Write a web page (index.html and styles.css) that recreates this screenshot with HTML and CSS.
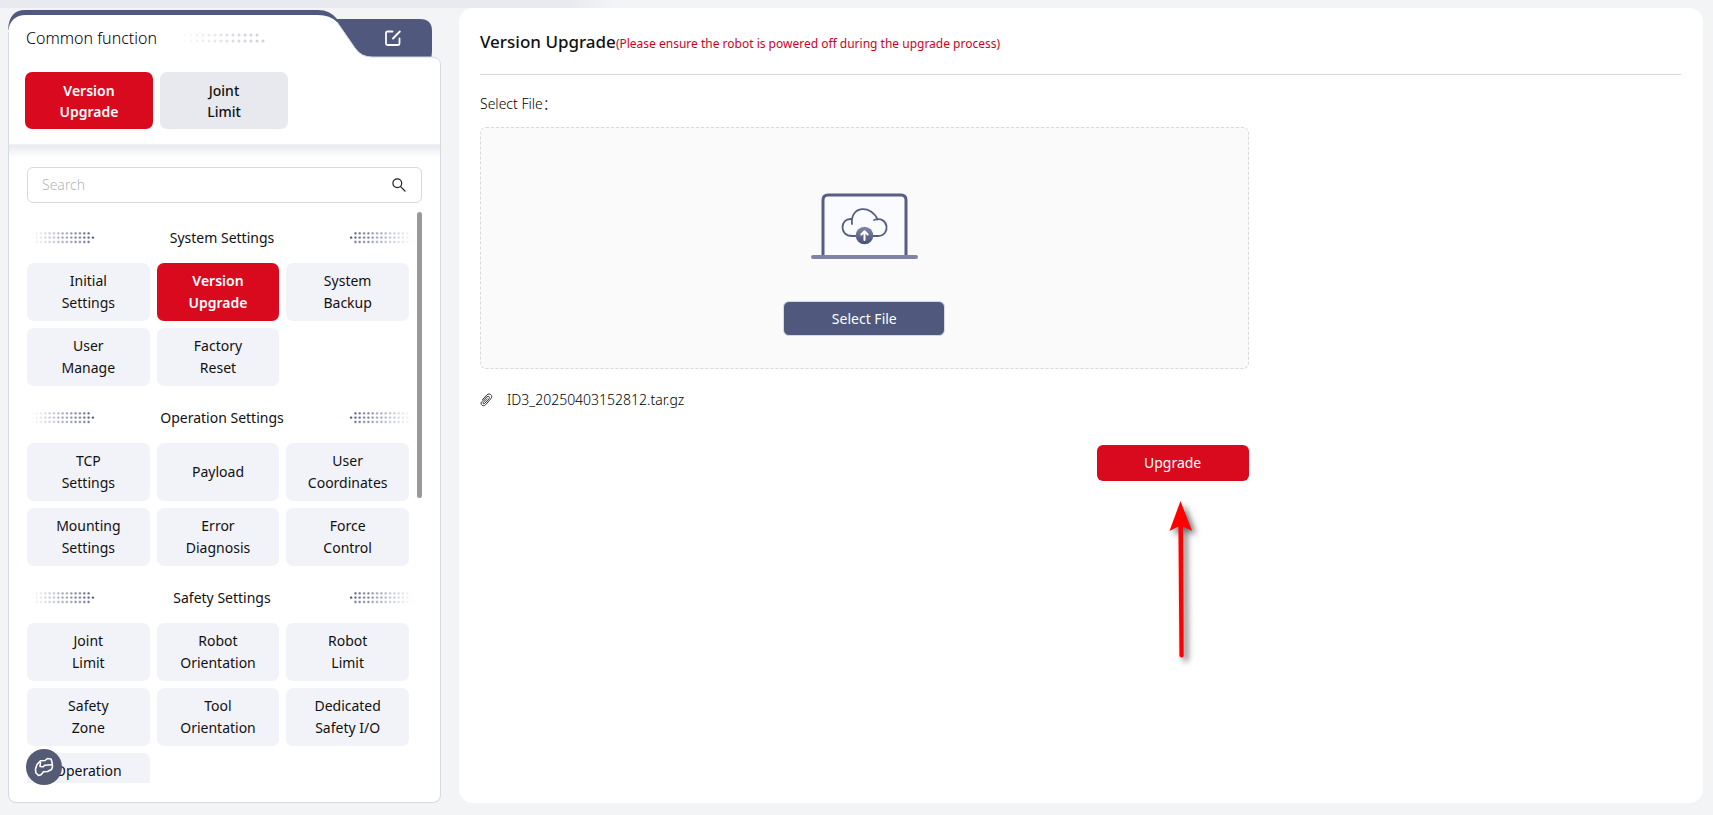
FILE: index.html
```html
<!DOCTYPE html>
<html lang="en">
<head>
	<meta charset="UTF-8">
	<title>Version Upgrade</title>
	<link rel="stylesheet" href="styles.css">
</head>
<body>
	<!-- shared dot patterns -->
	<svg class="defs" width="0" height="0" aria-hidden="true">
		<defs>
			<linearGradient id="fade" x1="0" x2="1" y1="0" y2="0">
				<stop offset="0" stop-color="#fff" stop-opacity="0"/>
				<stop offset="0.85" stop-color="#fff" stop-opacity="1"/>
			</linearGradient>
			<pattern id="dot" width="4.33" height="4.33" patternUnits="userSpaceOnUse">
				<circle cx="1.3" cy="1.3" r="1.1" fill="#50587d"/>
			</pattern>
			<pattern id="bigDot" width="6" height="6" patternUnits="userSpaceOnUse">
				<circle cx="2" cy="2" r="1.5" fill="#cfcfdd"/>
			</pattern>
			<mask id="fadeMask"><rect width="64" height="12" fill="url(#fade)"/></mask>
			<mask id="bigMask"><rect width="90" height="12" fill="url(#fade)"/></mask>
			<symbol id="dots" viewBox="0 0 64 12">
				<g mask="url(#fadeMask)">
					<rect width="60" height="12" fill="url(#dot)"/>
					<circle cx="61.9" cy="5.6" r="1.2" fill="#50587d"/>
				</g>
			</symbol>
		</defs>
	</svg>
	<div class="top-shadow"></div>
	<div id="container">
		<aside class="sidebar">
			<div class="tab">
				<svg class="tab-bg" viewBox="0 0 433 54" preserveAspectRatio="none" aria-hidden="true">
					<path fill="#50587d" d="M0 20Q1 0 17 0H310Q322 0 329 9H412Q424 9 424 21V40Q424 47 422 50H330L300 20Z"/>
					<path fill="#fff" d="M0 54V22Q2 5 18 5H310Q322 5 329 12L347 38Q353 47 364 47H422Q432 47 433 54Z"/>
					<path fill="none" stroke="#d5d9e2" d="M.5 54V22M329 12L347 38Q353 47 364 47H422Q432 47 432.500 54"/>
				</svg>
				<div class="tab-content">
					<span class="tab-title">Common function</span>
					<svg class="tab-dots" width="90" height="10" viewBox="0 0 90 10" aria-hidden="true">
						<g mask="url(#bigMask)">
							<rect width="84" height="10" fill="url(#bigDot)"/>
							<circle cx="86" cy="8" r="1.500" fill="#cfcfdd"/>
						</g>
					</svg>
					<button class="edit" type="button" aria-label="Edit">
						<svg width="16" height="16" viewBox="0 0 16 16" fill="none" stroke="#fff" stroke-width="1.800" stroke-linecap="round" stroke-linejoin="round">
							<path d="M7.500 1.500H2.500Q1 1.500 1 3V13.500Q1 15 2.500 15H13Q14.500 15 14.500 13.500V8.500"/>
							<path d="M8 8.500L14.800 1.500"/>
						</svg>
					</button>
				</div>
			</div>
			<div class="common">
				<button class="item on" type="button">Version<br>Upgrade</button>
				<button class="item" type="button">Joint<br>Limit</button>
			</div>
			<div class="panel">
				<label class="search">
					<input type="text" placeholder="Search" aria-label="Search">
					<svg width="14" height="14" viewBox="0 0 14 14" fill="none" stroke="#222" stroke-width="1.200" stroke-linecap="round">
						<circle cx="5.300" cy="5.300" r="4.400"/>
						<path d="M8.600 8.600L13 13"/>
					</svg>
				</label>
				<div class="scroll">
					<div class="list">
						<section>
							<h2><svg class="dots"><use href="#dots"/></svg>System Settings<svg class="dots flip"><use href="#dots"/></svg></h2>
							<div class="grid">
								<button class="item" type="button">Initial<br>Settings</button>
								<button class="item on" type="button">Version<br>Upgrade</button>
								<button class="item" type="button">System<br>Backup</button>
								<button class="item" type="button">User<br>Manage</button>
								<button class="item" type="button">Factory<br>Reset</button>
							</div>
						</section>
						<section>
							<h2><svg class="dots"><use href="#dots"/></svg>Operation Settings<svg class="dots flip"><use href="#dots"/></svg></h2>
							<div class="grid">
								<button class="item" type="button">TCP<br>Settings</button>
								<button class="item" type="button">Payload</button>
								<button class="item" type="button">User<br>Coordinates</button>
								<button class="item" type="button">Mounting<br>Settings</button>
								<button class="item" type="button">Error<br>Diagnosis</button>
								<button class="item" type="button">Force<br>Control</button>
							</div>
						</section>
						<section>
							<h2><svg class="dots"><use href="#dots"/></svg>Safety Settings<svg class="dots flip"><use href="#dots"/></svg></h2>
							<div class="grid">
								<button class="item" type="button">Joint<br>Limit</button>
								<button class="item" type="button">Robot<br>Orientation</button>
								<button class="item" type="button">Robot<br>Limit</button>
								<button class="item" type="button">Safety<br>Zone</button>
								<button class="item" type="button">Tool<br>Orientation</button>
								<button class="item" type="button">Dedicated<br>Safety I/O</button>
								<button class="item" type="button">Operation<br>&nbsp;</button>
							</div>
						</section>
					</div>
					<div class="bar"></div>
				</div>
			</div>
			<button class="float" type="button" aria-label="Robot">
				<svg width="20" height="20" viewBox="0 0 20 20" fill="none" stroke="#fff" stroke-width="1.600" stroke-linejoin="round" stroke-linecap="round">
					<path d="M1.500 12L3 7.500L6.500 3.800L11 3.500L13.500 1.500L17 2L18 5L18.500 9.500L17.500 12.500L13.500 14.500L9.500 14.800L7 17.800L4.500 18.500L1.800 15.800Z"/>
					<path d="M6.500 5.500L6 9.500L9 9.800L11 8.200L18 7.800"/>
				</svg>
			</button>
		</aside>
		<main class="main">
			<header class="title">
				<h1>Version Upgrade</h1>
				<span>(Please ensure the robot is powered off during the upgrade process)</span>
			</header>
			<p class="label">Select File：</p>
			<div class="content">
				<div class="drop">
					<svg width="108" height="68" viewBox="0 0 108 68" aria-hidden="true">
						<defs>
							<linearGradient id="ball" x1="0" x2="0" y1="0" y2="1">
								<stop offset="0" stop-color="#8187a3"/>
								<stop offset="1" stop-color="#485078"/>
							</linearGradient>
						</defs>
						<path fill="#fafbff" stroke="#565e85" stroke-width="3" d="M13 63V7Q13 2 18 2H91Q96 2 96 7V63"/>
						<path stroke="#7e84a2" stroke-width="4" stroke-linecap="round" d="M3 64H106"/>
						<g fill="none" stroke="#565e85" stroke-width="1.800" stroke-linecap="round">
							<path d="M47 43H42C29 43 30 25.500 41 26"/>
							<path d="M42 31C40 12 62 12 67.500 26.500"/>
							<path d="M64 27C79 22 81 43 68 43H62"/>
						</g>
						<circle cx="54.500" cy="42.500" r="8.800" fill="url(#ball)"/>
						<path fill="none" stroke="#fff" stroke-width="2" stroke-linecap="round" stroke-linejoin="round" d="M54.500 47V38.500M51.300 41.500L54.500 38.300L57.700 41.500"/>
					</svg>
					<button class="select" type="button">Select File</button>
				</div>
				<div class="file">
					<svg width="13" height="14" viewBox="0 0 13 14" fill="none" stroke="#333" stroke-width="1" stroke-linecap="round" aria-hidden="true">
						<path d="M2.500 6.500L7 1.800C9.500 -.5 13.300 2.500 11 5.500L5.500 11.800C3.300 14.200 -.2 11.500 1.500 9L7 3.800C8.600 2.500 10.300 4.200 9 5.800L4.500 10.500C3.500 11.300 2.600 10.300 3.400 9.300L7 5.700"/>
					</svg>
					<span>ID3_20250403152812.tar.gz</span>
				</div>
				<div class="action">
					<button class="upgrade" type="button">Upgrade</button>
					<svg class="arrow" width="40" height="176" viewBox="0 0 40 176" aria-hidden="true">
						<path fill="#f00" d="M17.500 4L29 34L20 29.500L20.700 159Q18.500 162 16.400 159L15.400 29.500L6.500 34Z"/>
					</svg>
				</div>
			</div>
		</main>
	</div>
</body>
</html>
```
FILE: styles.css
```css
*{
	padding: 0;
	margin: 0;
	box-sizing: border-box;
}
body{
	background-color: #f2f4f6;
	color: #111;
	font-family: "Noto Sans", "Noto Sans CJK SC", sans-serif;
	font-size: 14px;
	line-height: 22px;
}
button{
	border: none;
	font-family: inherit;
	font-size: 14px;
	line-height: 22px;
	cursor: pointer;
}
.defs{
	position: absolute;
}
.top-shadow{
	position: absolute;
	top: 0;
	left: 0;
	width: 36%;
	height: 8px;
	background: linear-gradient(to right, #e9eaef 92%, #f2f4f6);
}
#container{
	display: flex;
	gap: 18px;
	height: 100vh;
	padding: 8px 10px 12px 8px;
}
/*左侧菜单*/
.sidebar{
	display: flex;
	flex-direction: column;
	flex-shrink: 0;
	width: 433px;
	padding-top: 2px;
	position: relative;
}
.tab{
	display: grid;
}
.tab-bg, .tab-content{
	grid-area: 1 / 1;
}
.tab-bg{
	width: 100%;
	height: 54px;
}
.tab-content{
	display: flex;
	align-items: center;
	padding: 2px 36px 0 18px;
	z-index: 1;
}
.tab-title{
	color: #000;
	font-size: 16px;
	font-weight: 300;
}
.tab-dots{
	margin-left: 20px;
}
.edit{
	height: 24px;
	padding: 4px;
	margin-left: auto;
	background: none;
}
.edit svg, .float svg, .search svg{
	display: block;
}
.common{
	display: flex;
	gap: 7px;
	padding: 8px 16px 15px;
	background-color: #fff;
	border: solid #d5d9e2;
	border-width: 0 1px;
}
.common .item{
	width: 128px;
	height: 57px;
	background-color: #e8e9ee;
	font-weight: 500;
	line-height: 21px;
}
.item{
	height: 58px;
	border-radius: 7px;
	background-color: #f2f3f8;
	color: #111;
}
.item.on, .common .item.on{
	background-color: #da0a1e;
	color: #fff;
	font-weight: 600;
}
.panel{
	display: flex;
	flex-direction: column;
	flex: 1;
	min-height: 0;
	padding: 22px 18px 19px;
	background: linear-gradient(#e8eaef, #fff 13px);
	border: 1px solid #d5d9e2;
	border-top-color: #eef0f4;
	border-radius: 0 0 8px 8px;
}
.search{
	display: flex;
	align-items: center;
	height: 36px;
	padding: 0 15px 0 14px;
	border: 1px solid #d9d9d9;
	border-radius: 6px;
}
.search input{
	flex: 1;
	border: none;
	outline: none;
	background: none;
	font: inherit;
	font-weight: 300;
}
.search input::placeholder{
	color: #b5b5b5;
}
.scroll{
	display: flex;
	gap: 4px;
	flex: 1;
	min-height: 0;
	margin-top: 9px;
}
.list{
	flex: 1;
	overflow: hidden;
}
.bar{
	width: 5px;
	height: 50%;
	border-radius: 3px;
	background-color: #999;
}
h2{
	display: flex;
	align-items: center;
	justify-content: space-between;
	height: 51px;
	padding-left: 4px;
	font-size: 14px;
	font-weight: 400;
}
.dots{
	width: 64px;
	height: 12px;
}
.flip{
	transform: scaleX(-1);
}
.grid{
	display: grid;
	grid-template-columns: repeat(3, 1fr);
	gap: 7px;
	margin: 0 4px 6px 0;
}
.grid .item{
	font-weight: 400;
}
.grid .item.on{
	font-weight: 600;
}
.float{
	position: absolute;
	left: 18px;
	bottom: 18px;
	width: 36px;
	height: 36px;
	padding: 8px;
	border-radius: 50%;
	background-color: #555b75;
}
/*右侧内容*/
.main{
	flex: 1;
	padding: 0 22px 0 21px;
	border-radius: 14px;
	background-color: #fff;
}
.title{
	display: flex;
	align-items: baseline;
	height: 67px;
	padding-top: 23px;
	border-bottom: 1px solid #d5d7e2;
}
.title h1{
	font-size: 17px;
	font-weight: 500;
}
.title span{
	color: #d4001a;
	font-size: 12px;
}
.label{
	padding: 18px 0 12px;
}
.content{
	width: 64%;
}
.drop{
	display: flex;
	flex-direction: column;
	align-items: center;
	gap: 40px;
	padding: 65px 0 32px;
	border: 1px dashed #d9d9d9;
	border-radius: 6px;
	background-color: #fafafa;
}
.select{
	width: 162px;
	height: 35px;
	border: 1px solid #d9d9d9;
	border-radius: 6px;
	background-color: #50587d;
	color: #fff;
}
.file{
	display: flex;
	align-items: center;
	gap: 14px;
	padding: 20px 0 34px;
}
.file span, .label{
	color: #000;
	font-weight: 300;
}
.action{
	display: flex;
	justify-content: flex-end;
	position: relative;
}
.upgrade{
	width: 152px;
	height: 36px;
	border-radius: 6px;
	background-color: #da0a1e;
	color: #fff;
}
.arrow{
	position: absolute;
	top: 52px;
	right: 46px;
	filter: drop-shadow(4px 4px 3px rgba(0,0,0,0.6));
}
```
